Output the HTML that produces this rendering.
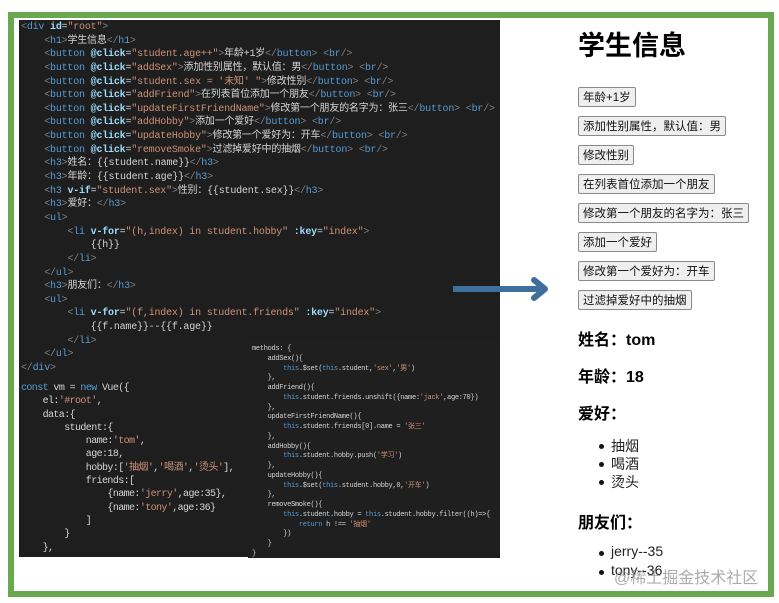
<!DOCTYPE html>
<html><head><meta charset="utf-8"><style>
*{margin:0;padding:0;box-sizing:border-box}
body{width:779px;height:603px;background:#fff;position:relative;overflow:hidden;font-family:"Liberation Sans","Noto Sans CJK SC",sans-serif}
#frame{position:absolute;left:8px;top:12px;width:766px;height:585px;border:6px solid #6aa84f}
.dark{position:absolute;background:#1e1e1e}
pre{position:absolute;font-family:"Liberation Mono","Noto Sans CJK SC",monospace;color:#d4d4d4;white-space:pre;margin:0}
.t{color:#808080}.n{color:#569cd6}.a{color:#9cdcfe;font-weight:bold}.s{color:#ce9178}.k{color:#569cd6}
#up{left:21px;top:21px;font-size:10px;line-height:13.64px;letter-spacing:-0.2px}
#lo{left:21px;top:382px;font-size:10px;line-height:13.3px;letter-spacing:-0.6px}
#me{left:252px;top:345px;font-size:7px;line-height:9.75px;letter-spacing:-0.3px}
button{position:absolute;left:578px;height:20px;font-family:"Liberation Sans","Noto Sans CJK SC",sans-serif;font-size:11.5px;background:#efefef;border:1px solid #8a8a8a;border-radius:2px;padding:0 4px;color:#111}
h1{position:absolute;left:578px;top:24px;font-size:27px;font-weight:bold}
h3{position:absolute;left:578px;font-size:16px;font-weight:bold}
.li{position:absolute;left:611px;font-size:14px;color:#222}
.li::before{content:"";position:absolute;left:-12px;top:8px;width:5px;height:5px;border-radius:50%;background:#111}
</style></head><body>
<div id="frame"></div>
<div class="dark" style="left:19px;top:20px;width:481px;height:537px"></div>
<div class="dark" style="left:248px;top:342px;width:252px;height:216px;background:#1f1f1f"></div>
<pre id="up"><span class="t">&lt;</span><span class="n">div</span> <span class="a">id</span>=<span class="s">"root"</span><span class="t">&gt;</span>
    <span class="t">&lt;</span><span class="n">h1</span><span class="t">&gt;</span>学生信息<span class="t">&lt;/</span><span class="n">h1</span><span class="t">&gt;</span>
    <span class="t">&lt;</span><span class="n">button</span> <span class="a">@click</span>=<span class="s">"student.age++"</span><span class="t">&gt;</span>年龄+1岁<span class="t">&lt;/</span><span class="n">button</span><span class="t">&gt;</span> <span class="t">&lt;</span><span class="n">br</span><span class="t">/&gt;</span>
    <span class="t">&lt;</span><span class="n">button</span> <span class="a">@click</span>=<span class="s">"addSex"</span><span class="t">&gt;</span>添加性别属性，默认值：男<span class="t">&lt;/</span><span class="n">button</span><span class="t">&gt;</span> <span class="t">&lt;</span><span class="n">br</span><span class="t">/&gt;</span>
    <span class="t">&lt;</span><span class="n">button</span> <span class="a">@click</span>=<span class="s">"student.sex = '未知' "</span><span class="t">&gt;</span>修改性别<span class="t">&lt;/</span><span class="n">button</span><span class="t">&gt;</span> <span class="t">&lt;</span><span class="n">br</span><span class="t">/&gt;</span>
    <span class="t">&lt;</span><span class="n">button</span> <span class="a">@click</span>=<span class="s">"addFriend"</span><span class="t">&gt;</span>在列表首位添加一个朋友<span class="t">&lt;/</span><span class="n">button</span><span class="t">&gt;</span> <span class="t">&lt;</span><span class="n">br</span><span class="t">/&gt;</span>
    <span class="t">&lt;</span><span class="n">button</span> <span class="a">@click</span>=<span class="s">"updateFirstFriendName"</span><span class="t">&gt;</span>修改第一个朋友的名字为：张三<span class="t">&lt;/</span><span class="n">button</span><span class="t">&gt;</span> <span class="t">&lt;</span><span class="n">br</span><span class="t">/&gt;</span>
    <span class="t">&lt;</span><span class="n">button</span> <span class="a">@click</span>=<span class="s">"addHobby"</span><span class="t">&gt;</span>添加一个爱好<span class="t">&lt;/</span><span class="n">button</span><span class="t">&gt;</span> <span class="t">&lt;</span><span class="n">br</span><span class="t">/&gt;</span>
    <span class="t">&lt;</span><span class="n">button</span> <span class="a">@click</span>=<span class="s">"updateHobby"</span><span class="t">&gt;</span>修改第一个爱好为：开车<span class="t">&lt;/</span><span class="n">button</span><span class="t">&gt;</span> <span class="t">&lt;</span><span class="n">br</span><span class="t">/&gt;</span>
    <span class="t">&lt;</span><span class="n">button</span> <span class="a">@click</span>=<span class="s">"removeSmoke"</span><span class="t">&gt;</span>过滤掉爱好中的抽烟<span class="t">&lt;/</span><span class="n">button</span><span class="t">&gt;</span> <span class="t">&lt;</span><span class="n">br</span><span class="t">/&gt;</span>
    <span class="t">&lt;</span><span class="n">h3</span><span class="t">&gt;</span>姓名：{{student.name}}<span class="t">&lt;/</span><span class="n">h3</span><span class="t">&gt;</span>
    <span class="t">&lt;</span><span class="n">h3</span><span class="t">&gt;</span>年龄：{{student.age}}<span class="t">&lt;/</span><span class="n">h3</span><span class="t">&gt;</span>
    <span class="t">&lt;</span><span class="n">h3</span> <span class="a">v-if</span>=<span class="s">"student.sex"</span><span class="t">&gt;</span>性别：{{student.sex}}<span class="t">&lt;/</span><span class="n">h3</span><span class="t">&gt;</span>
    <span class="t">&lt;</span><span class="n">h3</span><span class="t">&gt;</span>爱好：<span class="t">&lt;/</span><span class="n">h3</span><span class="t">&gt;</span>
    <span class="t">&lt;</span><span class="n">ul</span><span class="t">&gt;</span>
        <span class="t">&lt;</span><span class="n">li</span> <span class="a">v-for</span>=<span class="s">"(h,index) in student.hobby"</span> <span class="a">:key</span>=<span class="s">"index"</span><span class="t">&gt;</span>
            {{h}}
        <span class="t">&lt;/</span><span class="n">li</span><span class="t">&gt;</span>
    <span class="t">&lt;/</span><span class="n">ul</span><span class="t">&gt;</span>
    <span class="t">&lt;</span><span class="n">h3</span><span class="t">&gt;</span>朋友们：<span class="t">&lt;/</span><span class="n">h3</span><span class="t">&gt;</span>
    <span class="t">&lt;</span><span class="n">ul</span><span class="t">&gt;</span>
        <span class="t">&lt;</span><span class="n">li</span> <span class="a">v-for</span>=<span class="s">"(f,index) in student.friends"</span> <span class="a">:key</span>=<span class="s">"index"</span><span class="t">&gt;</span>
            {{f.name}}--{{f.age}}
        <span class="t">&lt;/</span><span class="n">li</span><span class="t">&gt;</span>
    <span class="t">&lt;/</span><span class="n">ul</span><span class="t">&gt;</span>
<span class="t">&lt;/</span><span class="n">div</span><span class="t">&gt;</span></pre>
<pre id="lo"><span class="k">const</span> vm = <span class="k">new</span> Vue({
    el:<span class="s">'#root'</span>,
    data:{
        student:{
            name:<span class="s">'tom'</span>,
            age:18,
            hobby:[<span class="s">'抽烟'</span>,<span class="s">'喝酒'</span>,<span class="s">'烫头'</span>],
            friends:[
                {name:<span class="s">'jerry'</span>,age:35},
                {name:<span class="s">'tony'</span>,age:36}
            ]
        }
    },</pre>
<pre id="me">methods: {
    addSex(){
        <span class="k">this</span>.$set(<span class="k">this</span>.student,<span class="s">'sex'</span>,<span class="s">'男'</span>)
    },
    addFriend(){
        <span class="k">this</span>.student.friends.unshift({name:<span class="s">'jack'</span>,age:70})
    },
    updateFirstFriendName(){
        <span class="k">this</span>.student.friends[0].name = <span class="s">'张三'</span>
    },
    addHobby(){
        <span class="k">this</span>.student.hobby.push(<span class="s">'学习'</span>)
    },
    updateHobby(){
        <span class="k">this</span>.$set(<span class="k">this</span>.student.hobby,0,<span class="s">'开车'</span>)
    },
    removeSmoke(){
        <span class="k">this</span>.student.hobby = <span class="k">this</span>.student.hobby.filter((h)=>{
            <span class="k">return</span> h !== <span class="s">'抽烟'</span>
        })
    }
}</pre>
<svg style="position:absolute;left:450px;top:274px" width="105" height="32"><path d="M3 15 H92" stroke="#3f6f9c" stroke-width="6"/><path d="M84 6 L95 15 L84 24" stroke="#3f6f9c" stroke-width="6" fill="none" stroke-linecap="round" stroke-linejoin="round"/></svg>
<h1>学生信息</h1>
<button style="top:87px">年龄+1岁</button>
<button style="top:116px">添加性别属性，默认值：男</button>
<button style="top:145px">修改性别</button>
<button style="top:174px">在列表首位添加一个朋友</button>
<button style="top:203px">修改第一个朋友的名字为：张三</button>
<button style="top:232px">添加一个爱好</button>
<button style="top:261px">修改第一个爱好为：开车</button>
<button style="top:290px">过滤掉爱好中的抽烟</button>
<h3 style="top:326px">姓名：tom</h3>
<h3 style="top:363px">年龄：18</h3>
<h3 style="top:400px">爱好：</h3>
<div class="li" style="top:436px">抽烟</div>
<div class="li" style="top:454px">喝酒</div>
<div class="li" style="top:472px">烫头</div>
<h3 style="top:509px">朋友们：</h3>
<div class="li" style="top:543px">jerry--35</div>
<div class="li" style="top:562px">tony--36</div>
<div style="position:absolute;left:614px;top:564px;font-size:16px;color:rgba(150,150,150,0.8)">@稀土掘金技术社区</div>
</body></html>
